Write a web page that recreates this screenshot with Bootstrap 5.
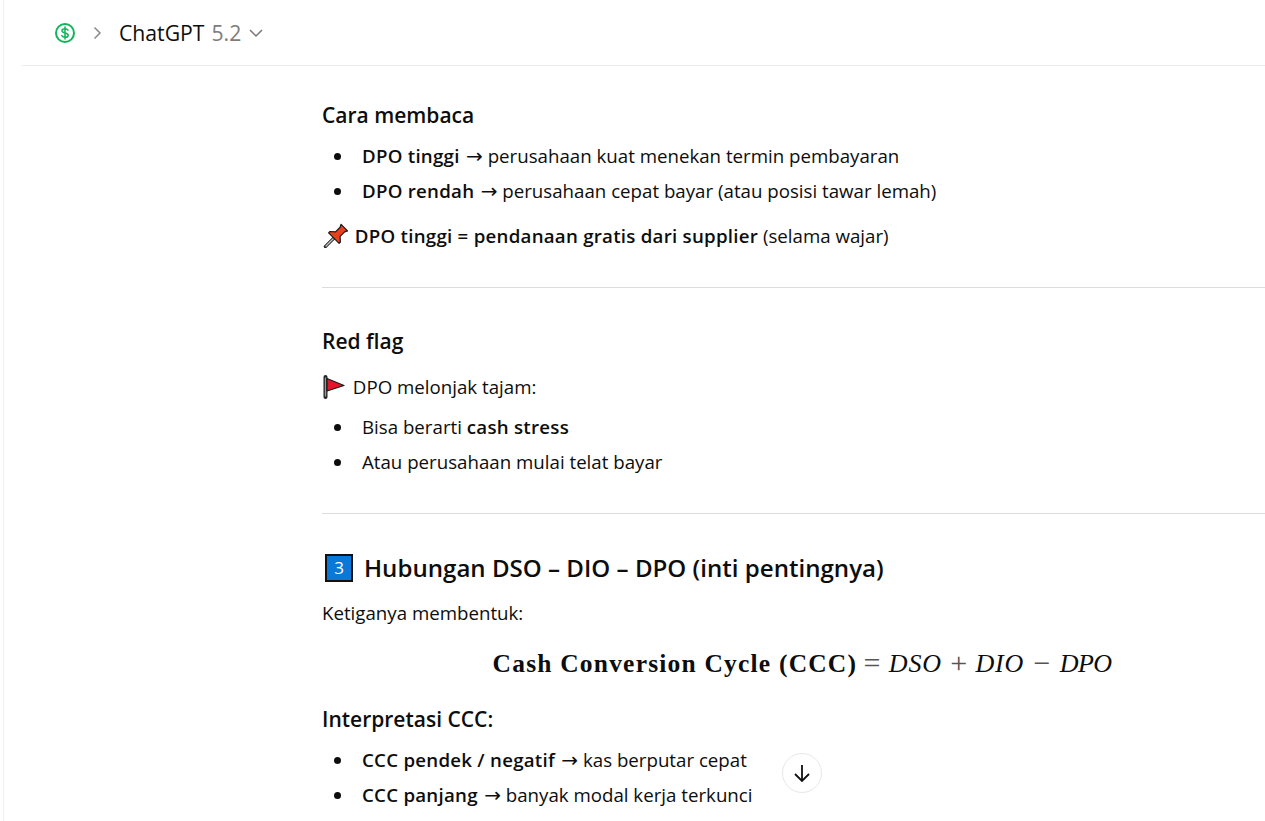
<!DOCTYPE html>
<html lang="id"><head><meta charset="utf-8"><title>ChatGPT</title>
<link href="https://cdn.jsdelivr.net/npm/bootstrap@5.3.0/dist/css/bootstrap.min.css" rel="stylesheet">
<style>
html,body{height:821px;overflow:hidden;background:#fff}
body{font-family:"Open Sans","Noto Sans",sans-serif;font-size:18.7px;color:#0d0d0d}
.appframe{height:821px;position:relative;border-left:1px solid #f1f1f1;margin-left:3px}
.topbar{height:66px;margin-left:18px;border-bottom:1px solid #ececec;padding:1px 0 0 32px}
.modelname{font-size:21.2px;margin-left:17px}
.modelver{color:#7d7d7d;margin-left:7px}
.thread{width:960px;margin-left:318px}
.thread h3{font-size:21px;font-weight:600;margin:0;line-height:28px}
.thread h2{font-size:24.1px;font-weight:600;margin:0;line-height:32px}
.thread p{margin:0;line-height:28px}
.thread ul{margin:0;padding:0 0 0 40px;list-style:none}
.thread li{line-height:28px;margin-bottom:7px;position:relative}
.thread li::before{content:"";position:absolute;left:-28px;top:11px;width:7px;height:7px;border-radius:50%;background:#0d0d0d}
.thread b{font-weight:600;letter-spacing:.25px}
.thread hr{margin:0;border-top:1px solid #dcdcdc;opacity:1}
.arrowglyph{font-family:"DejaVu Sans",sans-serif;font-size:20px;line-height:1;margin-left:1.5px}
.mathline{font-family:"Liberation Serif",serif;font-size:25.5px;text-align:center;line-height:32px;height:32px}
.thread .mathline b{font-weight:700;letter-spacing:1.2px}
.mathline i{font-size:26px;letter-spacing:.8px}
.mathline i.dpoterm{letter-spacing:-.6px}
.mathline span{color:#555;font-size:30px;line-height:1;vertical-align:-1px}
.mathline .opeq{margin-right:2px}
.mathline .opplus{margin:0 2px}
.mathline .opminus{margin:0 3px}
.downbtn{position:absolute;left:778px;top:753px;width:40px;height:40px;border:1px solid #e8e8e8;background:#fff}
.emo{display:inline-block;vertical-align:-5px;margin-right:3px}
.pinemo{margin-left:1px;margin-right:2px}
.keycap{display:inline-flex;align-items:center;justify-content:center;width:28px;height:28px;margin:0 11px 0 3px;background:#0a78d7;border:2px solid #111;color:#fff;font-size:17px;font-weight:400}
</style></head><body>
<div class="appframe">
<div class="topbar d-flex align-items-center">
<svg width="22" height="22" viewBox="0 0 22 22" fill="none"><circle cx="11" cy="11" r="9" stroke="#10b45a" stroke-width="2"/><path d="M14 8.200c-.5-1-1.600-1.500-3-1.500-1.700 0-3 .8-3 2.100 0 2.900 6.200 1.500 6.200 4.400 0 1.300-1.400 2.100-3.200 2.100-1.500 0-2.700-.6-3.200-1.700M11 5v12" stroke="#10b45a" stroke-width="1.500" stroke-linecap="round"/></svg>
<svg class="ms-3" width="10" height="14" viewBox="0 0 10 14" fill="none"><path d="M2.500 1.500 8 7l-5.500 5.500" stroke="#8a8a8a" stroke-width="1.500"/></svg>
<span class="modelname">ChatGPT<span class="modelver">5.2</span></span>
<svg class="ms-2" width="14" height="10" viewBox="0 0 14 10" fill="none"><path d="M1 2l6 6 6-6" stroke="#777" stroke-width="1.500"/></svg>
</div>
<main class="thread">
<h3 style="margin-top:35px">Cara membaca</h3>
<ul style="margin-top:13px"><li><b>DPO tinggi</b> <span class="arrowglyph">→</span> perusahaan kuat menekan termin pembayaran</li><li><b>DPO rendah</b> <span class="arrowglyph">→</span> perusahaan cepat bayar (atau posisi tawar lemah)</li></ul>
<p style="margin-top:17px"><svg class="emo pinemo" width="25" height="25" viewBox="-1 -2 27 27"><g transform="rotate(45 12.500 12.500)"><path d="M12.500 15v13" stroke="#222" stroke-width="3.400" stroke-linecap="round"/><path d="M12.500 16v11" stroke="#c4c4c4" stroke-width="1.500" stroke-linecap="round"/><path d="M7.500-1h10l-1.500 3v7l4.500 4v2h-16v-2l4.500-4V2z" fill="#e8401c" stroke="#1a1a1a" stroke-width="1.300" stroke-linejoin="round"/></g></svg> <b>DPO tinggi = pendanaan gratis dari supplier</b> (selama wajar)</p>
<hr style="margin-top:37px">
<h3 style="margin-top:39px">Red flag</h3>
<p style="margin-top:18px"><svg class="emo" width="23" height="24" viewBox="0 0 23 24"><path d="M3.500 2v20" stroke="#222" stroke-width="4" stroke-linecap="round"/><path d="M3.500 3v18" stroke="#999" stroke-width="1.400" stroke-linecap="round"/><path d="M5 3.500l17 7L5 16z" fill="#e3152b" stroke="#1a1a1a" stroke-width="1.200" stroke-linejoin="round"/></svg> DPO melonjak tajam:</p>
<ul style="margin-top:12px"><li>Bisa berarti <b>cash stress</b></li><li>Atau perusahaan mulai telat bayar</li></ul>
<hr style="margin-top:37px">
<h2 style="margin-top:38px" class="d-flex align-items-center"><span class="keycap">3</span>Hubungan DSO – DIO – DPO (inti pentingnya)</h2>
<p style="margin-top:15px">Ketiganya membentuk:</p>
<div class="mathline" style="margin-top:21px"><b>Cash Conversion Cycle (CCC)</b> <span class="opeq">=</span> <i>DSO</i> <span class="opplus">+</span> <i>DIO</i> <span class="opminus">−</span> <i class="dpoterm">DPO</i></div>
<h3 style="margin-top:25px">Interpretasi CCC:</h3>
<ul style="margin-top:13px"><li><b>CCC pendek / negatif</b> <span class="arrowglyph">→</span> kas berputar cepat</li><li><b>CCC panjang</b> <span class="arrowglyph">→</span> banyak modal kerja terkunci</li></ul>
</main>
<button class="downbtn btn rounded-circle p-0 d-flex align-items-center justify-content-center" aria-label="Gulir ke bawah"><svg width="22" height="22" viewBox="0 0 22 22" fill="none"><path d="M11 3v16M4 12l7 7 7-7" stroke="#111" stroke-width="1.800"/></svg></button>
</div>
<script src="https://cdn.jsdelivr.net/npm/bootstrap@5.3.0/dist/js/bootstrap.bundle.min.js"></script>
</body></html>
